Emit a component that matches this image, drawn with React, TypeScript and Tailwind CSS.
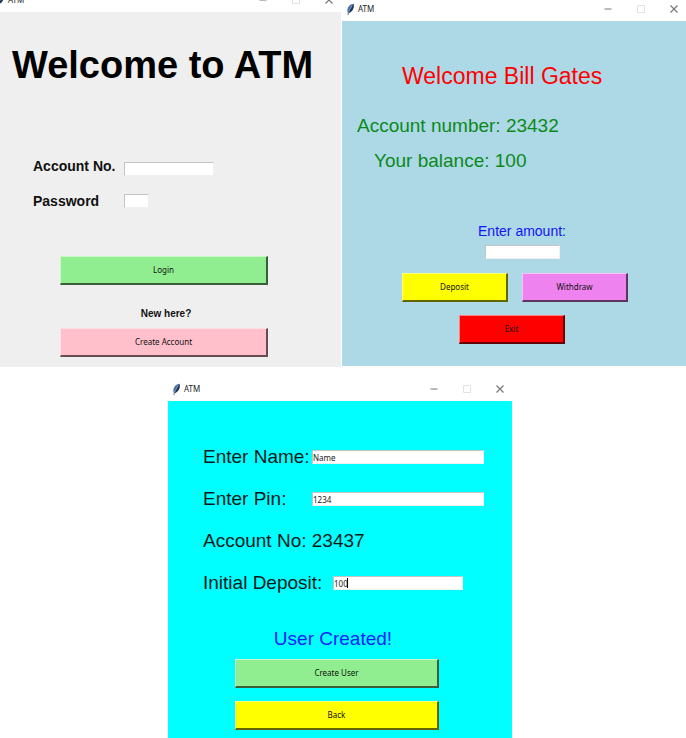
import type { ReactNode } from "react";

function Feather() {
  return (
    <svg viewBox="0 0 9 13" className="h-[13px] w-[9px]" aria-hidden="true">
      <path d="M7.2 0.8C4.2 1.2 1.700 4 1.400 6.800c-.2 1.600.2 2.700.8 3.600C5.400 9.400 7.400 6.400 7.700 3.800c.1-1.300 0-2.300-.5-3z" fill="#4a719f" />
      <path d="M7.200.8C6.900 2.600 4.400 6.400 2.400 10.200 5.400 9.400 7.400 6.400 7.700 3.800c.1-1.300 0-2.300-.5-3z" fill="#22324e" />
      <path d="M6.300 2.200C4.500 4.800 2.900 8 2 11.500" stroke="#8fb0d6" strokeWidth=".6" fill="none" />
      <path d="M2.500 9.500 1.900 12.200" stroke="#555" strokeWidth=".7" fill="none" />
    </svg>
  );
}

function TitleBar() {
  return (
    <header className="flex h-[21px] items-center bg-white pr-2 pb-[3px] pl-1">
      <Feather />
      <span className="ml-[3px] flex-1 text-[8px] leading-[18px] text-[#222]">ATM</span>
      <div className="flex gap-[25px]">
        <button type="button" aria-label="Minimize" className="h-2 w-2">
          <svg viewBox="0 0 8 8" className="block h-2 w-2">
            <path d="M.5 4h7" stroke="#777" fill="none" />
          </svg>
        </button>
        <button type="button" aria-label="Maximize" disabled className="h-2 w-2">
          <svg viewBox="0 0 8 8" className="block h-2 w-2">
            <path d="M.5.5h7v7h-7z" stroke="#e2e2e2" fill="none" />
          </svg>
        </button>
        <button type="button" aria-label="Close" className="h-2 w-2">
          <svg viewBox="0 0 8 8" className="block h-2 w-2">
            <path d="M.5.5l7 7M7.500.5l-7 7" stroke="#777" strokeWidth="1.2" fill="none" />
          </svg>
        </button>
      </div>
    </header>
  );
}

function TkButton({ className, children }: { className: string; children: ReactNode }) {
  return (
    <button
      type="button"
      className={`block h-[29px] border-t border-r-2 border-b-2 border-l border-t-white/50 border-r-black/60 border-b-black/60 border-l-white/50 text-center text-[8px] leading-[12px] text-[#111] ${className}`}
    >
      {children}
    </button>
  );
}

const entry =
  "block h-[14px] border border-t-[#c4c4c4] border-l-[#c4c4c4] border-r-[#f0f0f0] border-b-[#f0f0f0] bg-white text-[8px] leading-[12px] text-[#222] outline-none";

function LoginWindow() {
  return (
    <section className="overflow-hidden font-['Liberation_Sans',Arial,sans-serif]">
      <div className="-mt-[9px] -ml-2 font-['Noto_Sans',sans-serif]">
        <TitleBar />
      </div>
      <form className="bg-[#efefef] pt-[33px] pb-[10px]">
        <h1 className="pl-3 text-[38px] leading-[40px] font-bold whitespace-nowrap text-black">Welcome to ATM</h1>
        <div className="mt-16 flex pl-[33px] text-[14px] leading-[35px] font-bold text-[#111]">
          <div className="flex w-[91px] flex-col">
            <label htmlFor="account">Account No.</label>
            <label htmlFor="password">Password</label>
          </div>
          <div className="flex flex-col gap-[18px] pt-[13px]">
            <input id="account" type="text" className={`${entry} w-[90px]`} />
            <input id="password" type="password" className={`${entry} w-[25px]`} />
          </div>
        </div>
        <div className="mt-[37px] pr-[73px] pl-[60px] font-['Noto_Sans',sans-serif]">
          <TkButton className="w-full bg-[#90ee90]">Login</TkButton>
          <p className="mt-[15px] pl-1 text-center font-['Liberation_Sans',Arial,sans-serif] text-[10px] leading-[28px] font-bold text-[#111]">
            New here?
          </p>
          <TkButton className="w-full bg-[#ffc0cb]">Create Account</TkButton>
        </div>
      </form>
    </section>
  );
}

function AccountWindow() {
  return (
    <section className="font-['Noto_Sans',sans-serif]">
      <TitleBar />
      <form className="bg-[#add8e6] pt-10 pb-[22px]">
        <div className="font-['Liberation_Sans',Arial,sans-serif] whitespace-nowrap">
          <h2 className="pl-[60px] text-[23px] leading-[30px] text-[#ff0000]">Welcome Bill Gates</h2>
          <p className="mt-[17px] pl-[15px] text-[19px] leading-[35px] text-[#0b8a1a]">Account number: 23432</p>
          <p className="pl-8 text-[19px] leading-[35px] text-[#0b8a1a]">Your balance: 100</p>
        </div>
        <div className="mt-[43px] flex flex-col items-center pl-4">
          <label htmlFor="amount" className="font-['Liberation_Sans',Arial,sans-serif] text-[14px] leading-[20px] text-[#1414f5]">
            Enter amount:
          </label>
          <input id="amount" type="text" className={`${entry} mt-1 w-[75px]`} />
        </div>
        <div className="mt-[14px] flex justify-center gap-[14px] pl-[2px]">
          <TkButton className="w-[106px] bg-[#ffff00]">Deposit</TkButton>
          <TkButton className="w-[106px] bg-[#ee82ee]">Withdraw</TkButton>
        </div>
        <div className="mt-[13px] flex justify-center pr-1">
          <TkButton className="w-[106px] bg-[#ff0000]">Exit</TkButton>
        </div>
      </form>
    </section>
  );
}

function CreateUserWindow() {
  const label = "font-['Liberation_Sans',Arial,sans-serif] text-[19px] leading-[42px] whitespace-nowrap text-[#0a1a1a]";
  return (
    <section className="w-full max-w-[344px] font-['Noto_Sans',sans-serif]">
      <TitleBar />
      <form className="bg-[#00ffff] pt-[35px] pb-2">
        <div className="pr-7 pl-[35px]">
          <div className="flex items-center">
            <label htmlFor="name" className={`${label} w-[109px]`}>Enter Name:</label>
            <input id="name" type="text" defaultValue="Name" className={`${entry} min-w-0 flex-1`} />
          </div>
          <div className="flex items-center">
            <label htmlFor="pin" className={`${label} w-[109px]`}>Enter Pin:</label>
            <input id="pin" type="text" defaultValue="1234" className={`${entry} min-w-0 flex-1`} />
          </div>
          <p className={label}>Account No: 23437</p>
          <div className="flex items-center pr-[21px]">
            <label htmlFor="deposit" className={`${label} w-[130px]`}>Initial Deposit:</label>
            <div className="relative min-w-0 flex-1">
              <input id="deposit" type="text" defaultValue="100" className={`${entry} w-full`} />
              <span className="absolute top-[2px] left-[14px] h-[10px] w-px bg-black" />
            </div>
          </div>
        </div>
        <p className="mt-[23px] pr-[14px] text-center font-['Liberation_Sans',Arial,sans-serif] text-[19px] leading-[24px] text-[#0a22ff]">
          User Created!
        </p>
        <div className="mt-2 flex flex-col gap-[13px] pr-[73px] pl-[67px]">
          <TkButton className="w-full bg-[#90ee90]">Create User</TkButton>
          <TkButton className="w-full bg-[#ffff00]">Back</TkButton>
        </div>
      </form>
    </section>
  );
}

export default function App() {
  return (
    <main className="overflow-hidden bg-white">
      <div className="grid grid-cols-[341fr_344fr] items-start gap-px">
        <LoginWindow />
        <AccountWindow />
      </div>
      <div className="flex justify-center pt-[13px] pr-[6px]">
        <CreateUserWindow />
      </div>
    </main>
  );
}
